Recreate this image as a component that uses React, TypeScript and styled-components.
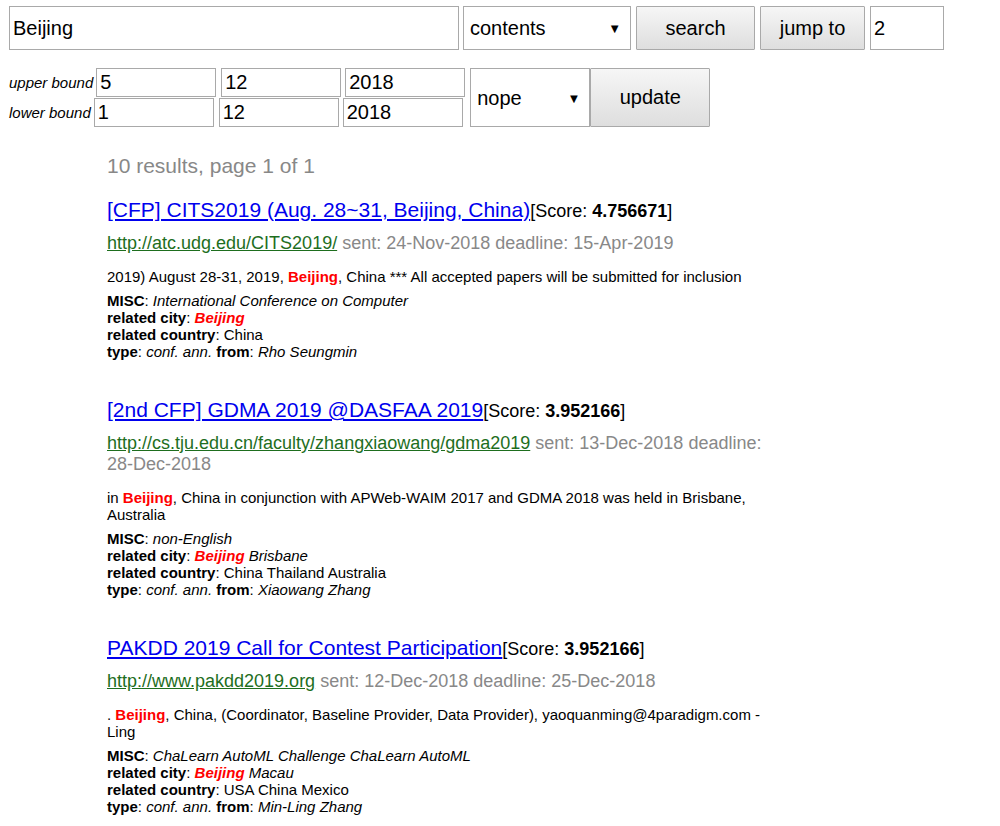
import styled, { createGlobalStyle } from "styled-components";

const GlobalStyle = createGlobalStyle`
  body {
    margin: 0;
    background: #fff;
    font-family: "Liberation Sans", Arial, sans-serif;
    color: #000;
  }
`;

const Page = styled.div`
  padding: 6px 9px 0 9px;
`;

const TopBar = styled.div`
  display: flex;
  align-items: stretch;
  height: 44px;
`;

const Field = styled.input<{ $w: number; $ml?: number }>`
  box-sizing: border-box;
  width: ${(p) => p.$w}px;
  margin-left: ${(p) => p.$ml ?? 0}px;
  height: 100%;
  border: 1px solid #a9a9a9;
  padding: 0 3px;
  font-family: "Liberation Sans", Arial, sans-serif;
  font-size: 20px;
  color: #000;
  outline: none;
`;

const SelectWrap = styled.div<{ $w: number; $ml: number }>`
  position: relative;
  width: ${(p) => p.$w}px;
  margin-left: ${(p) => p.$ml}px;
  & select {
    box-sizing: border-box;
    width: 100%;
    height: 100%;
    appearance: none;
    background: #fff;
    border: 1px solid #a9a9a9;
    padding: 0 6px;
    font-family: "Liberation Sans", Arial, sans-serif;
    font-size: 20px;
    color: #000;
  }
`;

const Arrow = styled.span`
  position: absolute;
  right: 10px;
  top: 50%;
  transform: translateY(-50%);
  font-size: 13px;
  pointer-events: none;
`;

const Button = styled.button<{ $w: number; $ml: number }>`
  box-sizing: border-box;
  width: ${(p) => p.$w}px;
  margin-left: ${(p) => p.$ml}px;
  height: 100%;
  border: 1px solid #a9a9a9;
  border-radius: 1px;
  background: linear-gradient(#f6f6f6, #dedede);
  font-family: "Liberation Sans", Arial, sans-serif;
  font-size: 20px;
  color: #000;
  padding: 0;
`;

const BoundsArea = styled.div`
  display: flex;
  margin-top: 18px;
  height: 59px;
`;

const BoundRows = styled.div`
  display: flex;
  flex-direction: column;
  justify-content: space-between;
`;

const BoundRow = styled.div`
  display: flex;
  align-items: center;
  height: 29px;
`;

const BoundLabel = styled.span`
  font-style: italic;
  font-size: 15px;
  margin-right: 3px;
`;

const SmallField = styled.input<{ $ml: number }>`
  box-sizing: border-box;
  width: 120px;
  height: 29px;
  margin-left: ${(p) => p.$ml}px;
  border: 1px solid #a9a9a9;
  padding: 0 3px;
  font-family: "Liberation Sans", Arial, sans-serif;
  font-size: 20px;
  outline: none;
`;

const Results = styled.div`
  margin-left: 98px;
  width: 660px;
  padding-top: 27px;
`;

const Summary = styled.div`
  font-size: 21px;
  line-height: 24px;
  color: #888;
  margin-bottom: 20px;
`;

const Entry = styled.div`
  margin-bottom: 38px;
`;

const TitleLine = styled.div`
  font-size: 18px;
  line-height: 24px;
`;

const TitleLink = styled.a`
  font-size: 21px;
  color: #0000ee;
  text-decoration: underline;
`;

const UrlLine = styled.div`
  margin-top: 10px;
  font-size: 18px;
  line-height: 21px;
  color: #888;
`;

const UrlLink = styled.a`
  color: #1e6e1e;
  text-decoration: underline;
`;

const Snippet = styled.div`
  margin-top: 14px;
  font-size: 15px;
  line-height: 17px;
`;

const Meta = styled.div`
  margin-top: 7px;
  font-size: 15px;
  line-height: 17px;
  & b {
    font-weight: bold;
  }
  & i {
    font-style: italic;
  }
`;

const Hit = styled.span<{ $italic?: boolean }>`
  color: #ff0000;
  font-weight: bold;
  font-style: ${(p) => (p.$italic ? "italic" : "normal")};
`;

type Result = {
  title: string;
  score: string;
  url: string;
  sent: string;
  deadline: string;
  before: string;
  after: string;
  misc: string;
  cityRest: string;
  country: string;
  from: string;
};

const results: Result[] = [
  {
    title: "[CFP] CITS2019 (Aug. 28~31, Beijing, China)",
    score: "4.756671",
    url: "http://atc.udg.edu/CITS2019/",
    sent: "24-Nov-2018",
    deadline: "15-Apr-2019",
    before: "2019) August 28-31, 2019, ",
    after: ", China *** All accepted papers will be submitted for inclusion",
    misc: "International Conference on Computer",
    cityRest: "",
    country: "China",
    from: "Rho Seungmin",
  },
  {
    title: "[2nd CFP] GDMA 2019 @DASFAA 2019",
    score: "3.952166",
    url: "http://cs.tju.edu.cn/faculty/zhangxiaowang/gdma2019",
    sent: "13-Dec-2018",
    deadline: "28-Dec-2018",
    before: "in ",
    after:
      ", China in conjunction with APWeb-WAIM 2017 and GDMA 2018 was held in Brisbane, Australia",
    misc: "non-English",
    cityRest: " Brisbane",
    country: "China Thailand Australia",
    from: "Xiaowang Zhang",
  },
  {
    title: "PAKDD 2019 Call for Contest Participation",
    score: "3.952166",
    url: "http://www.pakdd2019.org",
    sent: "12-Dec-2018",
    deadline: "25-Dec-2018",
    before: ". ",
    after:
      ", China, (Coordinator, Baseline Provider, Data Provider), yaoquanming@4paradigm.com - Ling",
    misc: "ChaLearn AutoML Challenge ChaLearn AutoML",
    cityRest: " Macau",
    country: "USA China Mexico",
    from: "Min-Ling Zhang",
  },
];

const App = () => {
  return (
    <Page>
      <GlobalStyle />
      <TopBar>
        <Field $w={450} defaultValue="Beijing" />
        <SelectWrap $w={168} $ml={4}>
          <select defaultValue="contents">
            <option value="contents">contents</option>
          </select>
          <Arrow>▼</Arrow>
        </SelectWrap>
        <Button $w={119} $ml={5}>search</Button>
        <Button $w={105} $ml={5}>jump to</Button>
        <Field $w={74} $ml={5} defaultValue="2" />
      </TopBar>
      <BoundsArea>
        <BoundRows>
          <BoundRow>
            <BoundLabel>upper bound</BoundLabel>
            <SmallField $ml={0} defaultValue="5" />
            <SmallField $ml={5} defaultValue="12" />
            <SmallField $ml={4} defaultValue="2018" />
          </BoundRow>
          <BoundRow>
            <BoundLabel>lower bound</BoundLabel>
            <SmallField $ml={0} defaultValue="1" />
            <SmallField $ml={5} defaultValue="12" />
            <SmallField $ml={4} defaultValue="2018" />
          </BoundRow>
        </BoundRows>
        <SelectWrap $w={120} $ml={5}>
          <select defaultValue="nope">
            <option value="nope">nope</option>
          </select>
          <Arrow>▼</Arrow>
        </SelectWrap>
        <Button $w={120} $ml={0}>update</Button>
      </BoundsArea>
      <Results>
        <Summary>10 results, page 1 of 1</Summary>
        {results.map((r) => (
          <Entry key={r.url}>
            <TitleLine>
              <TitleLink href="#">{r.title}</TitleLink>[Score: <b>{r.score}</b>]
            </TitleLine>
            <UrlLine>
              <UrlLink href="#">{r.url}</UrlLink> sent: {r.sent} deadline:{" "}
              {r.deadline}
            </UrlLine>
            <Snippet>
              {r.before}
              <Hit>Beijing</Hit>
              {r.after}
            </Snippet>
            <Meta>
              <b>MISC</b>: <i>{r.misc}</i>
              <br />
              <b>related city</b>: <i><Hit $italic>Beijing</Hit>{r.cityRest}</i>
              <br />
              <b>related country</b>: {r.country}
              <br />
              <b>type</b>: <i>conf. ann.</i> <b>from</b>: <i>{r.from}</i>
            </Meta>
          </Entry>
        ))}
      </Results>
    </Page>
  );
};

export default App;
